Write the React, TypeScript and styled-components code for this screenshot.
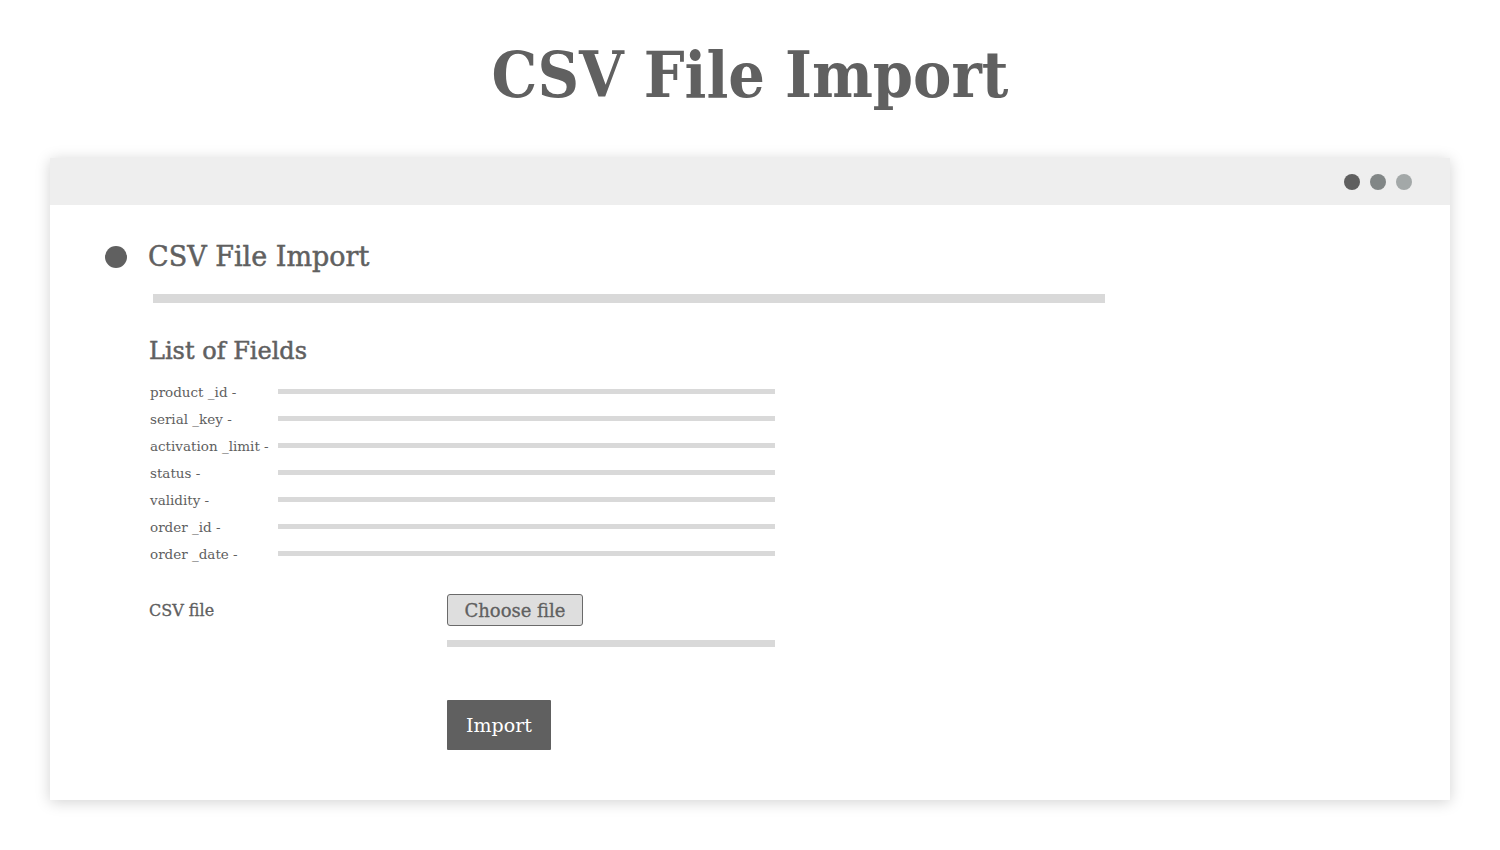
import React from "react";
import styled, { createGlobalStyle } from "styled-components";

const Global = createGlobalStyle`
  html, body { margin: 0; padding: 0; background: #ffffff; }
  body { font-family: "DejaVu Serif", "Liberation Serif", serif; color: #606060; }
`;

const Page = styled.div`
  width: 1500px;
  height: 850px;
  display: flex;
  flex-direction: column;
  align-items: center;
  box-sizing: border-box;
  padding-top: 36px;
`;

const Title = styled.h1`
  margin: 0;
  font-size: 64px;
  line-height: 78px;
  font-weight: 700;
  font-stretch: condensed;
  color: #606060;
`;

const Card = styled.div`
  margin-top: 44px;
  width: 1400px;
  height: 642px;
  background: #ffffff;
  box-shadow: 0 2px 14px rgba(0, 0, 0, 0.18);
  display: flex;
  flex-direction: column;
`;

const TopBar = styled.div`
  height: 47px;
  background: #eeeeee;
  display: flex;
  align-items: center;
  justify-content: flex-end;
  gap: 10px;
  padding-right: 38px;
`;

const Dot = styled.span<{ $c: string }>`
  width: 16px;
  height: 16px;
  border-radius: 50%;
  background: ${(p) => p.$c};
`;

const Body = styled.div`
  padding: 34px 0 0 55px;
  display: flex;
  flex-direction: column;
`;

const HeadRow = styled.div`
  display: flex;
  align-items: center;
  gap: 21px;
`;

const Bullet = styled.span`
  width: 22px;
  height: 22px;
  border-radius: 50%;
  background: #606060;
`;

const Heading = styled.h2`
  margin: 0;
  font-size: 27px;
  line-height: 36px;
  font-weight: 400;
  color: #606060;
  -webkit-text-stroke: 0.5px #606060;
`;

const Content = styled.div`
  padding-left: 44px;
  display: flex;
  flex-direction: column;
`;

const Rule = styled.div<{ $w: number; $h: number }>`
  width: ${(p) => p.$w}px;
  height: ${(p) => p.$h}px;
  background: #d9d9d9;
`;

const WideRule = styled(Rule)`
  margin: 19px 0 0 4px;
`;

const SubHeading = styled.h3`
  margin: 33px 0 12px;
  font-size: 24px;
  line-height: 30px;
  font-weight: 400;
  color: #606060;
  -webkit-text-stroke: 0.5px #606060;
`;

const FieldRow = styled.div`
  display: flex;
  align-items: center;
  height: 27px;
`;

const FieldLabel = styled.span`
  width: 128px;
  padding-left: 1px;
  font-size: 13.5px;
  color: #606060;
  white-space: nowrap;
`;

const FileRow = styled.div`
  display: flex;
  margin-top: 27px;
`;

const FileLabel = styled.span`
  width: 298px;
  padding-top: 2px;
  font-size: 16px;
  line-height: 30px;
  color: #606060;
  -webkit-text-stroke: 0.3px #606060;
`;

const FileCol = styled.div`
  display: flex;
  flex-direction: column;
`;

const ChooseButton = styled.button`
  width: 136px;
  height: 32px;
  box-sizing: border-box;
  border: 1px solid #6a6a6a;
  border-radius: 3px;
  background: #dedede;
  color: #606060;
  font-family: inherit;
  font-size: 18px;
  padding: 0;
  margin-bottom: 14px;
  -webkit-text-stroke: 0.3px #606060;
`;

const ImportButton = styled.button`
  margin-top: 53px;
  width: 104px;
  height: 50px;
  border: none;
  border-radius: 1px;
  background: #606060;
  color: #ffffff;
  font-family: inherit;
  font-size: 19px;
  padding: 0;
`;

const fields = [
  "product _id -",
  "serial _key -",
  "activation _limit -",
  "status -",
  "validity -",
  "order _id -",
  "order _date -",
];

export default function App() {
  return (
    <>
      <Global />
      <Page>
        <Title>CSV File Import</Title>
        <Card>
          <TopBar>
            <Dot $c="#5f5f5f" />
            <Dot $c="#818686" />
            <Dot $c="#a3a8a8" />
          </TopBar>
          <Body>
            <HeadRow>
              <Bullet />
              <Heading>CSV File Import</Heading>
            </HeadRow>
            <Content>
              <WideRule $w={952} $h={9} />
              <SubHeading>List of Fields</SubHeading>
              {fields.map((f) => (
                <FieldRow key={f}>
                  <FieldLabel>{f}</FieldLabel>
                  <Rule $w={497} $h={5} />
                </FieldRow>
              ))}
              <FileRow>
                <FileLabel>CSV file</FileLabel>
                <FileCol>
                  <ChooseButton>Choose file</ChooseButton>
                  <Rule $w={328} $h={7} />
                  <ImportButton>Import</ImportButton>
                </FileCol>
              </FileRow>
            </Content>
          </Body>
        </Card>
      </Page>
    </>
  );
}
